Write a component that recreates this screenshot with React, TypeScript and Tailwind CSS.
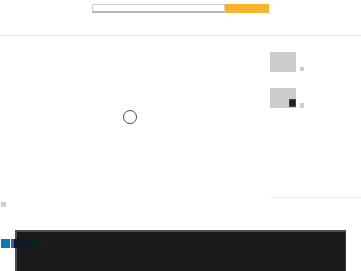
import React from "react";

export default function App() {
  return (
    <div className="relative w-[361px] h-[271px] overflow-hidden bg-white" style={{ fontFamily: "'Liberation Sans', Arial, sans-serif" }}>
      {/* header */}
      <div className="h-[36px] border-b border-[#ececec] flex justify-center pt-[4px]">
        <div className="flex h-[9px]">
          <div className="w-[133px] h-[9px] bg-white border border-[#d0d0d0] border-b-[#b5b5b5] border-b-2" />
          <div className="w-[44px] h-[9px] bg-[#fdb22b]" />
        </div>
      </div>

      {/* main */}
      <div className="flex h-[194px]">
        <div className="w-[270px] flex flex-col">
          <div className="pt-[74px] pl-[123px]">
            <div className="w-[14px] h-[14px] rounded-full border border-[#4a4a4a]" />
          </div>
          <div className="mt-[78px] ml-[1px] w-[5px] h-[5px] bg-[#cfcfcf]" />
        </div>
        <div className="flex-1 flex flex-col">
          <div className="pt-[16px] flex items-end gap-[4px]">
            <div className="w-[26px] h-[20px] bg-[#cccccc]" />
            <div className="w-[4px] h-[4px] bg-[#cccccc] mb-[1px]" />
          </div>
          <div className="mt-[16px] flex items-end gap-[4px]">
            <div className="w-[26px] h-[20px] bg-[#cccccc] flex items-end justify-end pb-[1px]">
              <div className="w-[7px] h-[8px] bg-[#222] border border-[#444]" />
            </div>
            <div className="w-[4px] h-[5px] bg-[#cccccc]" />
          </div>
          <div className="mt-[89px] h-px bg-[#efefef]" />
        </div>
      </div>

      {/* dark panel */}
      <div className="ml-[15px] w-[331px] h-[50px] bg-[#1b1b1b] border-t-2 border-l-2 border-r border-[#4d4d4d] border-r-[#3a3a3a]" />

      {/* color swatches overlay */}
      <div className="absolute left-[1px] top-[239px] flex gap-[1px]">
        <div className="w-[9px] h-[9px] bg-[#0b79b6]" />
        <div className="w-[9px] h-[9px] bg-[#0e1733] border-l-[3px] border-[#3d5ca6]" />
        <div className="w-[9px] h-[9px] bg-[#0c1a29]" />
        <div className="w-[9px] h-[9px] bg-[#0b2314]" />
        <div className="w-[9px] h-[9px] bg-[#1d1d1d]" />
      </div>
    </div>
  );
}
